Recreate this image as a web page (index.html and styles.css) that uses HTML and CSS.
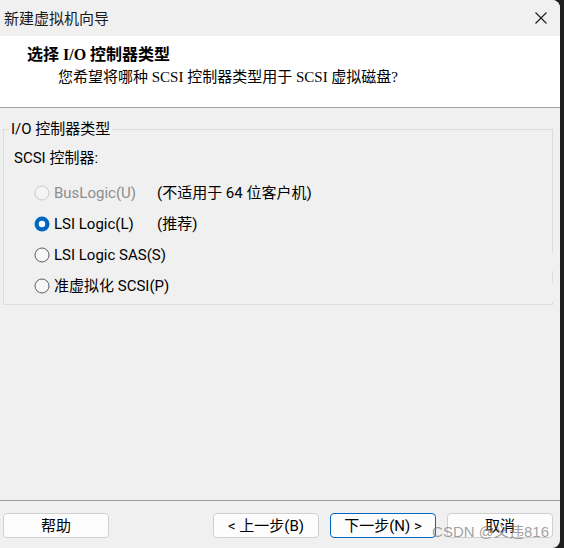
FILE: index.html
```html
<!DOCTYPE html>
<html lang="zh-CN">
<head>
<meta charset="utf-8">
<title>新建虚拟机向导</title>
<link rel="stylesheet" href="styles.css">
</head>
<body>
<div class="window">
  <div class="titlebar">
    <span class="title">新建虚拟机向导</span>
    <svg class="close" width="12" height="12" viewBox="0 0 12 12"><path d="M0.5 0.5 L11.5 11.5 M11.5 0.5 L0.5 11.5" stroke="#1a1a1a" stroke-width="1.1" fill="none"/></svg>
  </div>
  <div class="header">
    <div class="h-title">选择 I/O 控制器类型</div>
    <div class="h-sub">您希望将哪种 SCSI 控制器类型用于 SCSI 虚拟磁盘?</div>
  </div>
  <div class="main">
    <fieldset class="group">
      <legend class="legend">I/O 控制器类型</legend>
      <div class="sublabel">SCSI 控制器:</div>
      <div class="row disabled">
        <svg class="radio" width="16" height="16" viewBox="0 0 16 16"><circle cx="8" cy="8" r="7" fill="#f4f4f4" stroke="#c9c9c9" stroke-width="1"/></svg>
        <span class="lbl">BusLogic(U)</span>
        <span class="note">(不适用于 64 位客户机)</span>
      </div>
      <div class="row">
        <svg class="radio" width="16" height="16" viewBox="0 0 16 16"><circle cx="8" cy="8" r="7.5" fill="#0067c0"/><circle cx="8" cy="8" r="3.2" fill="#ffffff"/></svg>
        <span class="lbl">LSI Logic(L)</span>
        <span class="note">(推荐)</span>
      </div>
      <div class="row">
        <svg class="radio" width="16" height="16" viewBox="0 0 16 16"><circle cx="8" cy="8" r="7" fill="#f7f7f7" stroke="#5c5c5c" stroke-width="1"/></svg>
        <span class="lbl">LSI Logic SAS(S)</span>
      </div>
      <div class="row">
        <svg class="radio" width="16" height="16" viewBox="0 0 16 16"><circle cx="8" cy="8" r="7" fill="#f7f7f7" stroke="#5c5c5c" stroke-width="1"/></svg>
        <span class="lbl">准虚拟化 SCSI(P)</span>
      </div>
      <span class="gap gap1"></span>
      <span class="gap gap2"></span>
    </fieldset>
  </div>
  <div class="footer">
    <button class="btn">帮助</button>
    <div class="spacer"></div>
    <button class="btn">&lt; 上一步(B)</button>
    <button class="btn primary">下一步(N) &gt;</button>
    <button class="btn">取消</button>
    <span class="watermark">CSDN @义违816</span>
  </div>
</div>
</body>
</html>
```
FILE: styles.css
```css
html, body {
  margin: 0;
  padding: 0;
}
body {
  width: 564px;
  height: 548px;
  background: #1e1e1e;
  overflow: hidden;
  font-family: "Roboto", "Noto Sans CJK SC", sans-serif;
  font-size: 15px;
  color: #000;
}
.window {
  width: 560px;
  height: 548px;
  background: #f0f0f0;
  border-top-right-radius: 8px;
  border-bottom-right-radius: 8px;
  display: flex;
  flex-direction: column;
  overflow: hidden;
}
.titlebar {
  height: 36px;
  flex: none;
  display: flex;
  align-items: center;
  justify-content: space-between;
  padding-left: 4px;
  background: #f0f0f0;
}
.title {
  font-family: "Noto Sans CJK SC", sans-serif;
  font-size: 15px;
  line-height: 20px;
  color: #1a1a1a;
}
.close {
  margin-right: 13px;
}
.header {
  flex: none;
  height: 71px;
  box-sizing: content-box;
  background: #ffffff;
  border-bottom: 1px solid #a0a0a0;
  padding: 0;
}
.h-title {
  margin-top: 8px;
  padding-left: 27px;
  font-family: "Liberation Serif", "Noto Sans CJK SC", serif;
  font-weight: bold;
  font-size: 16px;
  line-height: 22px;
}
.h-sub {
  padding-left: 58px;
  font-family: "Liberation Serif", "Noto Sans CJK SC", serif;
  font-size: 15px;
  line-height: 22px;
}
.main {
  flex: 1;
  padding-top: 11px;
}
.group {
  position: relative;
  margin: 0 0 0 3px;
  width: 550px;
  box-sizing: border-box;
  padding: 0 0 3px 0;
  border: 1px solid #dcdcdc;
  min-width: 0;
}
.legend {
  margin-left: 5px;
  padding: 0 2px;
  line-height: 20px;
  font-size: 15px;
}
.sublabel {
  margin-top: 9px;
  padding-left: 10px;
  line-height: 20px;
  height: 20px;
  margin-bottom: 9px;
}
.row {
  height: 31px;
  display: flex;
  align-items: center;
  padding-left: 30px;
}
.radio {
  flex: none;
  margin-right: 4px;
}
.lbl {
  width: 103px;
  white-space: nowrap;
  line-height: 20px;
}
.note {
  white-space: nowrap;
  line-height: 20px;
}
.disabled .lbl {
  color: #8d8d8d;
}
.gap {
  position: absolute;
  right: -2px;
  width: 4px;
  background: #f0f0f0;
}
.gap1 {
  top: 113px;
  height: 19px;
}
.gap2 {
  top: 144px;
  height: 19px;
}
.footer {
  position: relative;
  flex: none;
  height: 47px;
  box-sizing: content-box;
  border-top: 1px solid #a0a0a0;
  display: flex;
  align-items: flex-start;
  gap: 11px;
  padding: 0 7px 0 3px;
}
.spacer {
  flex: 1;
}
.btn {
  margin-top: 12px;
  width: 106px;
  height: 25px;
  box-sizing: border-box;
  border: 1px solid #d0d0d0;
  border-radius: 4px;
  background: #fdfdfd;
  font-family: "Roboto", "Noto Sans CJK SC", sans-serif;
  font-size: 15px;
  line-height: 20px;
  padding: 0;
  color: #000;
}
.primary {
  border-color: #0067c0;
}
.watermark {
  position: absolute;
  right: 11px;
  top: 21px;
  font-family: "Liberation Sans", "Noto Sans CJK SC", sans-serif;
  font-size: 15px;
  line-height: 20px;
  color: rgba(130, 130, 130, 0.75);
  white-space: nowrap;
  pointer-events: none;
}
```
